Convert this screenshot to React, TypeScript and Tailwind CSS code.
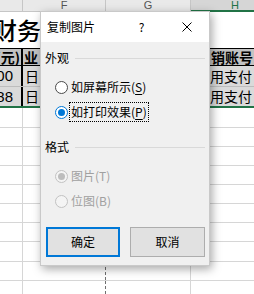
import React from "react";

function Radio({
  text,
  mn,
  underline,
  checked,
  disabled,
  focused,
  className,
}: {
  text: string;
  mn: string;
  underline?: boolean;
  checked?: boolean;
  disabled?: boolean;
  focused?: boolean;
  className: string;
}) {
  const ring = disabled
    ? "border-[#c2c2c2] bg-[#f4f4f4]"
    : checked
    ? "border-[#0078d7] bg-white"
    : "border-[#4a4a4a] bg-white";
  const dot = disabled ? "bg-[#bdbdbd]" : "bg-[#0078d7]";
  return (
    <div className={"flex h-[20px] items-center " + className}>
      <div
        className={
          "ml-[10px] flex h-[13px] w-[13px] shrink-0 items-center justify-center rounded-full border " +
          ring
        }
      >
        {checked ? <div className={"h-[7px] w-[7px] rounded-full " + dot} /> : null}
      </div>
      <div
        className={
          "ml-[1px] flex h-[20px] items-center whitespace-nowrap border px-[1px] leading-[16px] " +
          (focused ? "border-dotted border-black " : "border-transparent ") +
          (disabled ? "text-[#a0a0a0]" : "text-black")
        }
      >
        {text}(
        {underline ? <span className="underline underline-offset-[2px]">{mn}</span> : mn})
      </div>
    </div>
  );
}

function GroupTitle({ label, className }: { label: string; className: string }) {
  return (
    <div className={"flex h-[16px] items-center gap-[6px] " + className}>
      <div className="leading-[16px]">{label}</div>
      <div className="flex-1 border-t border-[#d9d9d9]" />
    </div>
  );
}

const lowerRows = [
  "h-[20px]",
  "h-[19px]",
  "h-[19px]",
  "h-[19px]",
  "h-[19px]",
  "h-[19px]",
  "h-[19px]",
  "h-[20px]",
  "h-[19px]",
  "h-[19px]",
];

export default function App() {
  return (
    <div className="relative h-[294px] w-[254px] overflow-hidden bg-white font-['Noto_Sans_CJK_SC',sans-serif]">
      {/* column header */}
      <div className="flex h-[12px] bg-[#e9e9e9] font-['Liberation_Sans',sans-serif] text-[11px] leading-[10px] text-[#555]">
        <div className="w-[23px] shrink-0 border-r border-b border-[#c6c6c6]" />
        <div className="flex w-[83px] shrink-0 justify-center border-r border-b border-[#c6c6c6]">F</div>
        <div className="flex w-[85px] shrink-0 justify-center border-r border-b border-[#c6c6c6]">G</div>
        <div className="flex w-[88px] shrink-0 justify-center border-b-2 border-[#217346] bg-[#d6d6d6] text-[#217346]">
          H
        </div>
      </div>

      {/* title row */}
      <div className="h-[36px] overflow-hidden whitespace-nowrap">
        <div className="ml-[-7px] text-[24px] font-medium leading-[36px] text-black">财务</div>
      </div>

      {/* table header row */}
      <div className="flex h-[18px] whitespace-nowrap border-y border-black bg-[#c3c3c3] text-[14px] font-bold leading-[16px] text-black">
        <div className="flex w-[21px] shrink-0 justify-end overflow-hidden pr-[1px]">
          <span>(元)</span>
        </div>
        <div className="w-[84px] shrink-0 overflow-hidden border-l-2 border-black pl-[1px]">业</div>
        <div className="w-[85px] shrink-0 overflow-hidden" />
        <div className="w-[88px] shrink-0 overflow-hidden pl-[21px]">销账号</div>
      </div>

      {/* data rows */}
      <div className="flex h-[21px] whitespace-nowrap border-b border-[#bdbdbd] bg-[#dadada] text-[14px] leading-[20px] text-black">
        <div className="flex w-[21px] shrink-0 justify-end overflow-hidden pr-[8px] font-['Liberation_Sans',sans-serif] text-[15px]">
          <span>100</span>
        </div>
        <div className="w-[84px] shrink-0 overflow-hidden border-l-2 border-black pl-[2px]">日</div>
        <div className="w-[85px] shrink-0 overflow-hidden" />
        <div className="w-[88px] shrink-0 overflow-hidden pl-[20px]">用支付</div>
      </div>
      <div className="flex h-[19px] whitespace-nowrap bg-[#dadada] text-[14px] leading-[19px] text-black">
        <div className="flex w-[21px] shrink-0 justify-end overflow-hidden pr-[8px] font-['Liberation_Sans',sans-serif] text-[15px]">
          <span>188</span>
        </div>
        <div className="w-[84px] shrink-0 overflow-hidden border-l-2 border-black pl-[2px]">日</div>
        <div className="w-[85px] shrink-0 overflow-hidden" />
        <div className="w-[88px] shrink-0 overflow-hidden pl-[20px]">用支付</div>
      </div>
      <div className="h-[2px] bg-[#217346]" />

      {/* empty grid rows */}
      {lowerRows.map((h, i) => (
        <div key={i} className={"flex border-b border-[#d6d6d6] " + h}>
          <div className="w-[23px] shrink-0 border-r border-[#d6d6d6]" />
          <div className="w-[83px] shrink-0 border-r border-dashed border-[#6f6f6f]" />
          <div className="w-[85px] shrink-0 border-r border-[#d6d6d6]" />
          <div className="flex-1" />
        </div>
      ))}

      {/* dialog */}
      <div className="absolute left-[40px] top-[11px] flex h-[255px] w-[170px] flex-col border border-[#c9c9c9] bg-[#f0f0f0] text-[12px] text-black shadow-[2px_3px_9px_rgba(0,0,0,0.35)]">
        <div className="flex h-[30px] shrink-0 items-center bg-white">
          <div className="flex-1 pl-[6px] leading-[16px]">复制图片</div>
          <div className="flex h-full w-[45px] items-center justify-center leading-[16px]">?</div>
          <div className="flex h-full w-[45px] items-center justify-center">
            <svg width="10" height="10" viewBox="0 0 10 10">
              <path d="M0.5 0.5 L9.5 9.5 M9.5 0.5 L0.5 9.5" stroke="#000" strokeWidth="1" fill="none" />
            </svg>
          </div>
        </div>
        <div className="flex flex-col px-[4px] pt-[8px]">
          <GroupTitle label="外观" className="" />
          <Radio text="如屏幕所示" mn="S" underline className="mt-[11px]" />
          <Radio text="如打印效果" mn="P" underline checked focused className="mt-[5px]" />
          <GroupTitle label="格式" className="mt-[17px]" />
          <Radio text="图片" mn="T" checked disabled className="mt-[11px]" />
          <Radio text="位图" mn="B" disabled className="mt-[5px]" />
          <div className="ml-[1px] mt-[16px] flex gap-[10px]">
            <div className="flex h-[30px] w-[74px] items-center justify-center border-2 border-[#0078d7] bg-[#e1e1e1] leading-[16px]">
              确定
            </div>
            <div className="flex h-[30px] w-[75px] items-center justify-center border border-[#adadad] bg-[#e1e1e1] leading-[16px]">
              取消
            </div>
          </div>
        </div>
      </div>
    </div>
  );
}
